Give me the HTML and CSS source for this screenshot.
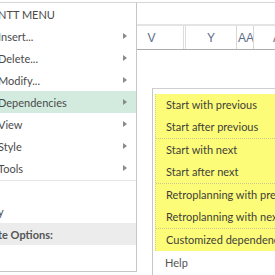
FILE: index.html
```html
<!DOCTYPE html>
<html lang="en">
<head>
  <meta charset="UTF-8">
  <title>Gantt menu</title>
  <link rel="stylesheet" href="styles.css">
</head>
<body>

  <div class="sheet">
    <div class="toolbar"></div>
    <div class="colheads">
      <div class="col col-v">V</div>
      <div class="col col-y">Y</div>
      <div class="col col-aa">AA</div>
      <div class="col col-ab">AB</div>
    </div>
  </div>

  <div class="menu">
    <div class="menu-title"><span class="cut">GA</span>NTT MENU</div>
    <div class="item">Insert...<span class="arrow"></span></div>
    <div class="item">Delete...<span class="arrow"></span></div>
    <div class="item">Modify...<span class="arrow"></span></div>
    <div class="item active">Dependencies<span class="arrow"></span></div>
    <div class="item">View<span class="arrow"></span></div>
    <div class="item">Style<span class="arrow"></span></div>
    <div class="item">Tools<span class="arrow"></span></div>
    <div class="sep"></div>
    <div class="item plain"><span class="cut">Histor</span>y</div>
    <div class="item group"><span class="cut">Templa</span>te Options:</div>
  </div>

  <div class="submenu">
    <div class="hl">
      <div class="sub">Start with previous</div>
      <div class="sub">Start after previous</div>
      <div class="dots"></div>
      <div class="sub">Start with next</div>
      <div class="sub">Start after next</div>
      <div class="dots"></div>
      <div class="sub">Retroplanning with previous</div>
      <div class="sub">Retroplanning with next</div>
      <div class="dots"></div>
      <div class="sub">Customized dependencies</div>
    </div>
    <div class="sub help">Help</div>
  </div>

</body>
</html>
```

FILE: styles.css
```css
body {
  margin: 0;
  width: 275px;
  height: 275px;
  overflow: hidden;
  position: relative;
  font-family: Lato, "Noto Sans", sans-serif;
  font-size: 11px;
  color: #4a4a4a;
  background: #fff;
}

/* spreadsheet behind the menus */
.toolbar {
  height: 21px;
  border-top: 1px solid #d6d6d6;
  margin-top: 2px;
}

.colheads {
  display: flex;
  height: 23px;
  border-top: 2px solid #e4e4e4;
  border-bottom: 1px solid #ababab;
  padding-left: 120px;
}

.col {
  display: flex;
  align-items: center;
  justify-content: center;
  flex: none;
  border-right: 1px solid #d8d8d8;
  color: #5a6b86;
  font-family: "Liberation Sans", sans-serif;
  font-size: 12px;
  overflow: hidden;
  white-space: nowrap;
}
.col-v { width: 63px; border-right: 3px double #dcdcdc; }
.col-y { width: 50px; }
.col-aa { width: 15px; justify-content: flex-start; padding-left: 1px; }
.col-ab { width: 40px; border-right: 0; justify-content: flex-start; padding-left: 19px; }

/* main menu, scrolled slightly off the left edge */
.menu {
  position: absolute;
  left: -2px;
  top: 2px;
  width: 138px;
  height: 268px;
  background: #fff;
  border-top: 1px solid #d6d6d6;
  border-right: 1px solid #c6c6c6;
  border-bottom: 1px solid #c6c6c6;
}

.menu-title, .item {
  display: flex;
  align-items: center;
  height: 22px;
  white-space: nowrap;
}

.cut {
  display: inline-block;
  width: 0;
  direction: rtl;
  white-space: nowrap;
}

.item { position: relative; }
.item.active { background: #d3ebdf; }

.arrow {
  position: absolute;
  left: 125px;
  top: 8px;
  width: 0;
  height: 0;
  border-left: 4px solid #8a8a8a;
  border-top: 3px solid transparent;
  border-bottom: 3px solid transparent;
}

.sep {
  height: 0;
  border-top: 1px solid #e6e6e6;
  margin: 1px 0 19px;
}

.item.group {
  margin-top: 1px;
  background: #ececec;
  font-weight: bold;
  color: #555;
}

/* dependencies submenu */
.submenu {
  position: absolute;
  left: 152px;
  top: 88px;
  width: 140px;
  height: 200px;
  background: #fff;
  border-top: 1px solid #cfcfcf;
  border-left: 1px solid #c6c6c6;
  padding: 5px 0 0 2px;
}

.hl {
  background: #fcfc78;
  border-left: 1px dotted #d4d46a;
}

.sub {
  display: flex;
  align-items: center;
  height: 21.5px;
  padding-left: 10px;
  white-space: nowrap;
  color: #3f3f3a;
}

.dots {
  height: 0;
  margin-top: 1px;
  border-top: 1px dotted #c9c98a;
}

.sub.help {
  margin-top: 1.5px;
  color: #555;
}
```
